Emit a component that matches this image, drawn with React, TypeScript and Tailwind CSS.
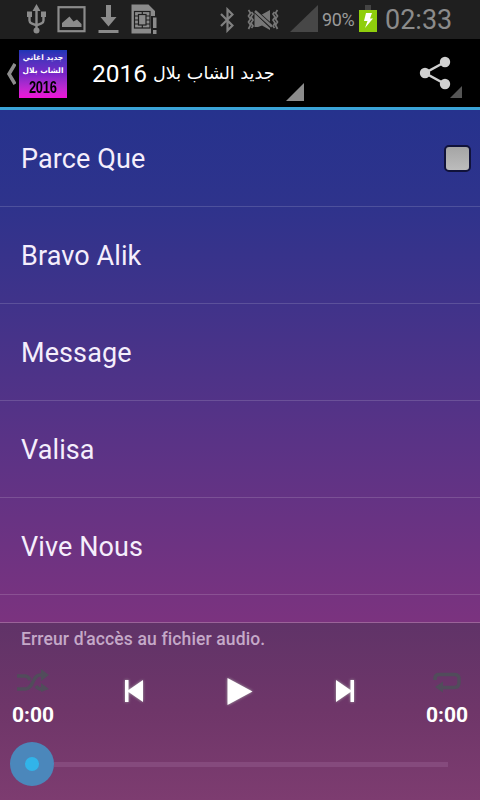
import { ReactNode } from "react"

type IconProps = {
  w: number,
  h: number,
  className?: string,
  children: ReactNode
}

const songs = ["Parce Que", "Bravo Alik", "Message", "Valisa", "Vive Nous"]

const Icon = ({ w, h, className = "", children }: IconProps) => {
  return (
    <svg width={w} height={h} viewBox={`0 0 ${w} ${h}`} className={`shrink-0 ${className}`}>{children}</svg>
  )
}

const StatusBar = () => {
  return (
    <div className="flex h-[39px] shrink-0 items-start bg-[#1f1f1f] text-[#8b8b8b]">
      {/* usb */}
      <Icon w={20} h={30} className="mt-[4px] ml-[26px]">
        <g fill="none" stroke="currentColor" strokeWidth="2.4">
          <path d="M10.5 6V26M3.5 12v4.5q0 2 2 2.8l5 2M17.5 12v4.5q0 2-2 2.8l-5 2" />
        </g>
        <path d="M10.5 0l4 7h-8zM1 7.5h5v5.500H1zM15 7.5h5v5.500h-5z" fill="currentColor" />
        <circle cx="10.5" cy="26.5" r="3" fill="currentColor" />
      </Icon>
      {/* picture */}
      <Icon w={29} h={27} className="mt-[6px] ml-[11px]">
        <rect x="1.5" y="1.2" width="26" height="24" fill="none" stroke="currentColor" strokeWidth="2.2" />
        <path d="M5 21v-4l7.500-6.500 4 5 3.500-2 4.500 4.500V21z" fill="currentColor" />
      </Icon>
      {/* download */}
      <Icon w={21} h={28} className="mt-[5px] ml-[12px]">
        <path d="M8 0h5v12h5.500l-8 9.500L2.500 12H8zM0.500 25H20.500V28H0.500z" fill="currentColor" />
      </Icon>
      {/* sim card */}
      <Icon w={27} h={31} className="mt-[4px] ml-[12px]">
        <path d="M0.500 0.500H17.500L24 7V12H20V29.500H0.500z" fill="currentColor" />
        <rect x="3.5" y="7.5" width="15.5" height="16.5" fill="none" stroke="#1f1f1f" strokeWidth="1.2" />
        <rect x="7.5" y="10.5" width="7.5" height="10.5" fill="none" stroke="#1f1f1f" strokeWidth="1.2" />
        <path d="M3.500 12h4M3.500 16h4M3.500 20h4M15 12h4M15 16h4M15 20h4M11.300 7.500v3M11.300 21v3" stroke="#1f1f1f" strokeWidth="1.2" />
        <path d="M22 13.500h3.500V24H22zM22 26h3.500v4H22z" fill="currentColor" />
      </Icon>
      {/* bluetooth */}
      <Icon w={14} h={26} className="mt-[7px] ml-[62px] text-[#808080]">
        <path d="M1 7l11.500 11.500L7.500 23.500V2.500l5 5L1 19" fill="none" stroke="currentColor" strokeWidth="2.2" />
      </Icon>
      {/* vibrate, muted */}
      <Icon w={32} h={22} className="mt-[9px] ml-[13px] text-[#777]">
        <path d="M1.500 1l2 3-2 3 2 3-2 3 2 3-2 4M4.500 3l1.500 2-2 3 2 3-2 3 2 3-1.500 2M30.500 1l-2 3 2 3-2 3 2 3-2 3 2 4M27.500 3L26 5l2 3-2 3 2 3-2 3 1.500 2" fill="none" stroke="currentColor" strokeWidth="1.7" />
        <path d="M7.500 4L23 19v2L15 16.500 11 18H7.500zM14 6L23 1v12z" fill="currentColor" />
        <path d="M8 2L25 17.500" stroke="#1f1f1f" strokeWidth="4" />
        <path d="M8 2L25 17.500" stroke="currentColor" strokeWidth="2.4" />
      </Icon>
      <Icon w={28} h={27} className="mt-[5px] ml-[11px]">
        <path d="M0 27L28 0V27z" fill="#474747" />
      </Icon>
      <span className="ml-[4px] mt-[8px] w-[33px] whitespace-nowrap text-[18px] leading-6 tracking-[-0.4px] text-[#9a9a9a]">90%</span>
      {/* battery */}
      <Icon w={18} h={27} className="mt-[5px] ml-[4px]">
        <path d="M6 0h6v5H6z" fill="#444" />
        <path d="M0 5H18V27H0z" fill="#8fce0c" />
        <path d="M7 8h6l-2 5.500h3L6 23l2.500-7H5z" fill="#fff" />
      </Icon>
      <span className="ml-[8px] mt-[4px] whitespace-nowrap text-[27px] leading-8 text-[#8b8b8b]">02:33</span>
    </div>
  )
}

const ActionBar = () => {
  return (
    <header className="flex h-[71px] shrink-0 items-start border-b-[3px] border-[#3ba4d8] bg-black">
      <Icon w={10} h={22} className="mt-[24px] ml-[6px]">
        <path d="M9 1L3 11l6 10" fill="none" stroke="#8c8c8c" strokeWidth="3.5" />
      </Icon>
      <div dir="rtl" className="mt-[11px] ml-[3px] flex h-[48px] w-[48px] flex-col items-center bg-linear-to-b from-[#1d35b5] via-[#7a25c8] to-[#f010d8] font-['DejaVu_Sans','Noto_Sans',sans-serif] font-bold text-white">
        <span className="mt-[1px] whitespace-nowrap text-[7.5px] leading-[13px]">جديد اغاني</span>
        <span className="whitespace-nowrap text-[7.5px] leading-[13px]">الشاب بلال</span>
        <span dir="ltr" className="mt-[2px] scale-x-[0.78] font-['Liberation_Sans',sans-serif] text-[16.5px] leading-[17px] tracking-[-0.3px] text-black">2016</span>
      </div>
      <div className="mt-[20px] ml-[25px] flex w-[184px] items-start whitespace-nowrap text-white">
        <span className="text-[24.5px] leading-[30px]">2016</span>
        <span dir="rtl" className="ml-[6px] font-['DejaVu_Sans','Noto_Sans',sans-serif] text-[17.6px] leading-[28px]">جديد الشاب بلال</span>
      </div>
      <Icon w={18} h={18} className="mt-[44px] ml-[10px]">
        <path d="M0 18L18 0V18z" fill="#8c8c8c" />
      </Icon>
      <Icon w={32} h={34} className="mt-[17px] ml-[115px]">
        <path d="M26 6L6 17l20 11" fill="none" stroke="#d0d0d0" strokeWidth="2.5" />
        <g fill="#d0d0d0">
          <circle cx="6" cy="17" r="5.2" />
          <circle cx="26" cy="6" r="5.2" />
          <circle cx="26" cy="28" r="5.2" />
        </g>
      </Icon>
      <Icon w={12} h={12} className="mt-[47px] -ml-[1px]">
        <path d="M0 12L12 0V12z" fill="#555" />
      </Icon>
    </header>
  )
}

const Player = () => {
  return (
    <footer className="flex h-[178px] shrink-0 flex-col border-t border-[#9a6399] bg-linear-to-b from-[#603368] via-[#6f3669] to-[#7d3c70]">
      <p className="mt-[4px] ml-[21px] text-[17.5px] font-medium leading-6 tracking-[0.13px] text-[#c5a9c8]">Erreur d'accès au fichier audio.</p>
      <div className="mt-[18px] flex h-[61px] items-start justify-between pr-[12px] pl-[12px] text-white">
        <div className="flex w-[42px] flex-col items-center">
          <Icon w={34} h={24}>
            <g fill="none" stroke="#514c5b" strokeWidth="3.5">
              <path d="M1 7h8q3 0 5 4M1 20h8c9 0 7-14 15-14h3M20 17q2 3 5 3h3" />
            </g>
            <path d="M25 0l8 6-8 6zM25 14l8 6-8 3z" fill="#514c5b" />
          </Icon>
          <span className="mt-[9px] text-[21px] font-bold leading-[26px]">0:00</span>
        </div>
        <Icon w={26} h={30} className="mt-[7px] -ml-[9px] overflow-visible drop-shadow-[0_0_1.5px_#aaa]">
          <path d="M4 4h3.500v10L22 4v22L7.500 16v10H4z" fill="#fff" />
        </Icon>
        <Icon w={32} h={34} className="mt-[5px] overflow-visible drop-shadow-[0_0_1.5px_#aaa]">
          <path d="M3.500 4l25 13.500L3.500 31z" fill="#fff" />
        </Icon>
        <Icon w={26} h={30} className="mt-[7px] -mr-[8px] overflow-visible drop-shadow-[0_0_1.5px_#aaa]">
          <path d="M4 4l14.500 10V4H22v22h-3.500V16L4 26z" fill="#fff" />
        </Icon>
        <div className="flex w-[42px] flex-col items-center">
          <Icon w={28} h={24}>
            <path d="M2 11V9.500q0-4 4-4h15q5 0 5 4v4q0 5-5 5H8" fill="none" stroke="#514c5b" strokeWidth="3.5" />
            <path d="M10 12.500v11l-8-5.500z" fill="#514c5b" />
          </Icon>
          <span className="mt-[9px] text-[21px] font-bold leading-[26px]">0:00</span>
        </div>
      </div>
      <div className="mt-[12px] flex h-[44px] items-center pr-[32px] pl-[10px]">
        <div className="flex size-[44px] shrink-0 items-center justify-center rounded-full bg-[#4b87bb]">
          <div className="size-[14px] rounded-full bg-[#31b4e9]" />
        </div>
        <div className="h-[5px] flex-1 bg-[#854a7d]" />
      </div>
    </footer>
  )
}

export default function App() {
  return (
    <div className="flex h-[800px] w-[480px] flex-col overflow-hidden bg-black font-[Roboto,sans-serif]">
      <StatusBar />
      <ActionBar />
      <ul className="min-h-0 flex-1 overflow-hidden bg-[linear-gradient(#26328d,#2e338c_18%,#40338a_38%,#5a3386_65%,#7b337f)]">
        {
          songs.map((song, i) => {
            return (
              <li key={song} className="flex h-[97px] items-center justify-between border-b border-white/15 pr-[9px] pl-[21px]">
                <span className="mt-[2px] text-[27px] leading-8 tracking-[0.1px] text-[#f5eefc]">{song}</span>
                {i === 0 && <span className="size-[27px] rounded-[5px] border-2 border-[#10123a] bg-linear-to-b from-[#a5a5a5] to-[#bcbcbc]" />}
              </li>
            )
          })
        }
      </ul>
      <Player />
    </div>
  )
}
